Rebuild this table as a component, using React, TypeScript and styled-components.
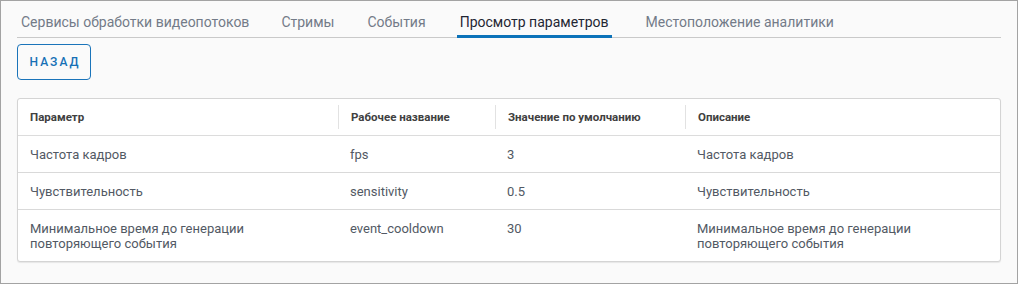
import React from "react";
import styled, { createGlobalStyle } from "styled-components";

const Global = createGlobalStyle`
  html, body { margin: 0; padding: 0; background: #fafafa; }
  body { font-family: Roboto, "Liberation Sans", Arial, sans-serif; }
  * { box-sizing: border-box; }
`;

const Frame = styled.div`
  width: 1018px;
  height: 284px;
  border: 1px solid #a3a3a3;
  background: #fafafa;
  padding: 0 16px;
  display: flex;
  flex-direction: column;
  align-items: flex-start;
`;

const TabBar = styled.div`
  align-self: stretch;
  height: 37px;
  border-bottom: 1px solid #c9c9c9;
  display: flex;
  align-items: stretch;
  padding-left: 1px;
`;

const Tab = styled.div<{ $active?: boolean; $gap: number }>`
  position: relative;
  padding: 11px 3px 0;
  margin-right: ${(p) => p.$gap}px;
  font-size: 14px;
  line-height: 20px;
  color: ${(p) => (p.$active ? "#1f2633" : "#737b88")};
  white-space: nowrap;
  ${(p) =>
    p.$active &&
    `&::after {
      content: "";
      position: absolute;
      left: 0;
      right: 0;
      bottom: -1px;
      height: 3px;
      background: #0b72b9;
    }`}
`;

const BackButton = styled.button`
  margin-top: 6px;
  width: 74px;
  height: 36px;
  border: 1px solid #1a74ba;
  border-radius: 4px;
  background: transparent;
  color: #1670b6;
  font-family: Roboto, "Liberation Sans", Arial, sans-serif;
  font-size: 12px;
  font-weight: 500;
  letter-spacing: 2px;
  padding: 0 0 0 2px;
  display: flex;
  align-items: center;
  justify-content: center;
`;

const Card = styled.div`
  margin-top: 18px;
  align-self: stretch;
  background: #ffffff;
  border: 1px solid #d4d4d4;
  border-radius: 3px;
  box-shadow: 0 1px 1px rgba(0, 0, 0, 0.08);
  display: grid;
  grid-template-columns: 320px 157px 190px 1fr;
`;

const HeadCell = styled.div`
  height: 37px;
  border-bottom: 1px solid #dcdcdc;
  display: flex;
  align-items: center;
`;

const HeadLabel = styled.div<{ $sep?: boolean }>`
  height: 24px;
  display: flex;
  align-items: center;
  padding-left: 12px;
  border-left: ${(p) => (p.$sep ? "1px solid #e2e2e2" : "none")};
  font-size: 11.5px;
  font-weight: 700;
  color: #404040;
  white-space: nowrap;
`;

const Cell = styled.div<{ $last?: boolean }>`
  padding: 11px 40px 10px 12px;
  font-size: 13px;
  line-height: 15px;
  color: #525964;
  border-bottom: ${(p) => (p.$last ? "none" : "1px solid #d9d9d9")};
`;

const tabs = [
  { t: "Сервисы обработки видеопотоков", g: 26 },
  { t: "Стримы", g: 27 },
  { t: "События", g: 28 },
  { t: "Просмотр параметров", g: 31 },
  { t: "Местоположение аналитики", g: 0 },
];

const rows = [
  { p: "Частота кадров", n: "fps", v: "3", d: "Частота кадров" },
  { p: "Чувствительность", n: "sensitivity", v: "0.5", d: "Чувствительность" },
  {
    p: "Минимальное время до генерации повторяющего события",
    n: "event_cooldown",
    v: "30",
    d: "Минимальное время до генерации повторяющего события",
  },
];

const heads = ["Параметр", "Рабочее название", "Значение по умолчанию", "Описание"];

export default function App() {
  return (
    <>
      <Global />
      <Frame>
        <TabBar>
          {tabs.map((t, i) => (
            <Tab key={t.t} $active={i === 3} $gap={t.g}>
              {t.t}
            </Tab>
          ))}
        </TabBar>
        <BackButton>НАЗАД</BackButton>
        <Card>
          {heads.map((h, i) => (
            <HeadCell key={h}>
              <HeadLabel $sep={i > 0}>{h}</HeadLabel>
            </HeadCell>
          ))}
          {rows.map((r, i) => {
            const last = i === rows.length - 1;
            return (
              <React.Fragment key={r.n}>
                <Cell $last={last}>{r.p}</Cell>
                <Cell $last={last}>{r.n}</Cell>
                <Cell $last={last}>{r.v}</Cell>
                <Cell $last={last}>{r.d}</Cell>
              </React.Fragment>
            );
          })}
        </Card>
      </Frame>
    </>
  );
}
